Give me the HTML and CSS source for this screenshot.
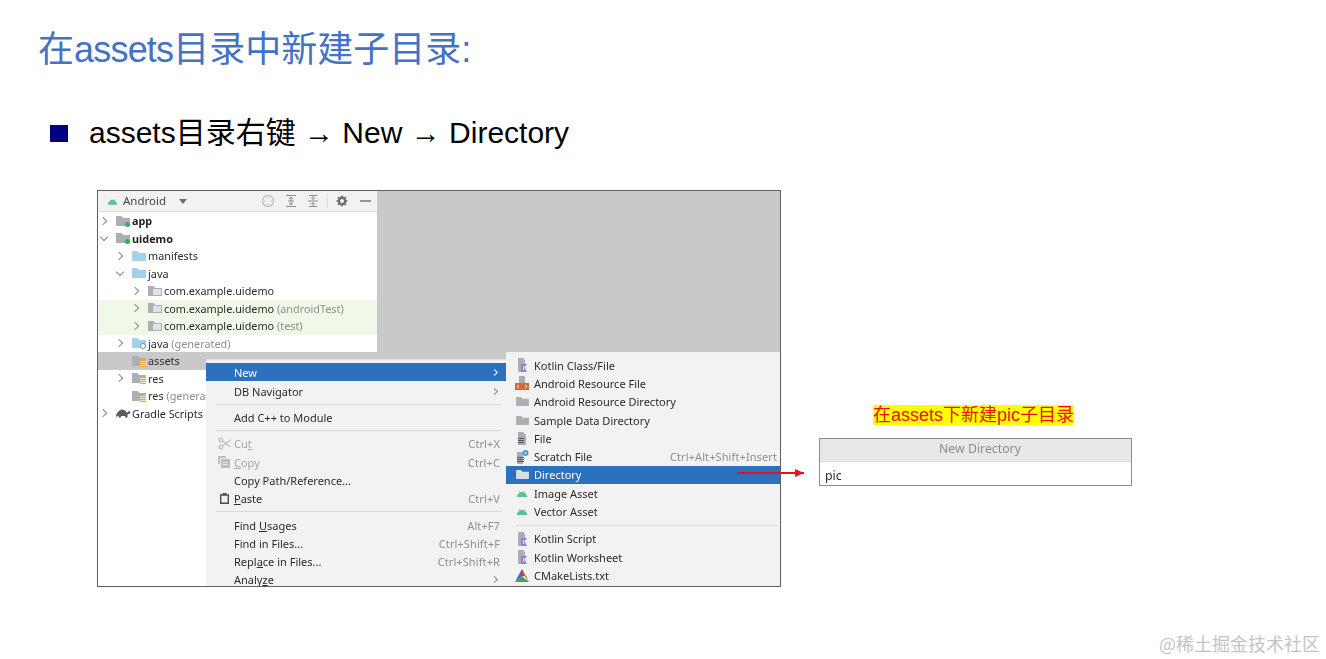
FILE: index.html
```html
<!DOCTYPE html>
<html lang="zh-CN">
<head>
<meta charset="utf-8">
<title>在assets目录中新建子目录</title>
<link rel="stylesheet" href="styles.css">
</head>
<body>
<svg class="defs" width="0" height="0" aria-hidden="true">
  <symbol id="android" viewBox="0 0 14 10"><path d="M1 9c.3-2.500 1.600-4.300 3.400-5.200L3.400 2.200l.5-.3 1.100 1.600c1.300-.5 2.700-.5 4 0l1.100-1.600.5.3-1 1.600C11.400 4.700 12.700 6.500 13 9z"/></symbol>
  <symbol id="folder" viewBox="0 0 14 12"><path d="M0 1h5.500l1.500 2h7v8H0z"/></symbol>
  <symbol id="k-file" viewBox="0 0 14 14"><path fill="#a9adb8" d="M3 0h6v2h1v4H6v8H3z"/><path fill="#8f7fd0" d="M6 6h6L9.500 9.500 12 14H6z"/><path fill="#f2f2f2" d="M8 8h1.500L8.500 10l1 2H8z"/></symbol>
</svg>

<h1 class="title">在<span class="latin">assets</span>目录中新建子目录:</h1>

<div class="bullet-row">
  <span class="bullet"></span>
  <p class="bullet-text">assets目录右键 → New → Directory</p>
</div>

<main class="content">
  <section class="shot">
    <div class="tree">
      <header class="tool-header">
        <svg class="ico-android" width="11" height="9"><use href="#android"/></svg>
        <span class="tool-name">Android</span>
        <span class="caret"></span>
        <svg class="tool-icons" width="112" height="16" viewBox="0 0 112 16" fill="none" stroke="#8c8c8c">
          <circle cx="6" cy="8" r="5.500" stroke="#c4c4c4" stroke-width="1.500"/>
          <path d="M6 4v2M6 10v2M2 8h2M8 8h2" stroke="#c4c4c4"/>
          <path d="M24 2.500h10M24 13.500h10M29 4v8M27 6l2-2 2 2M27 10l2 2 2-2M26 8h6"/>
          <path d="M46 8h10M47 2.500h8M47 13.500h8M51 2v4M51 10v4M49 4.500l2 2 2-2M49 11.500l2-2 2 2"/>
          <path d="M65.500 1v14" stroke="#dcdcdc"/>
          <circle cx="80" cy="8" r="3.200" stroke="#6e6e6e" stroke-width="2.400"/>
          <path d="M80 2.500v2M80 11.500v2M74.500 8h2M83.500 8h2M76 4l1.500 1.500M84 4l-1.500 1.500M76 12l1.500-1.500M84 12l-1.500-1.500" stroke="#6e6e6e" stroke-width="1.600"/>
          <path d="M98 8h11" stroke="#6e6e6e" stroke-width="1.400"/>
        </svg>
      </header>

      <div class="row d0"><span class="chev right"></span><span class="ic"><svg class="f-grey" width="14" height="12"><use href="#folder"/></svg><i class="dot"></i></span><b>app</b></div>
      <div class="row d0"><span class="chev down"></span><span class="ic"><svg class="f-grey" width="14" height="12"><use href="#folder"/></svg><i class="dot"></i></span><b>uidemo</b></div>
      <div class="row d1"><span class="chev right"></span><span class="ic"><svg class="f-blue" width="14" height="12"><use href="#folder"/></svg></span>manifests</div>
      <div class="row d1"><span class="chev down"></span><span class="ic"><svg class="f-blue" width="14" height="12"><use href="#folder"/></svg></span>java</div>
      <div class="row d2"><span class="chev right"></span><span class="ic"><svg class="f-grey" width="14" height="12"><use href="#folder"/></svg><i class="pkg"></i></span>com.example.uidemo</div>
      <div class="row d2 test"><span class="chev right"></span><span class="ic"><svg class="f-grey" width="14" height="12"><use href="#folder"/></svg><i class="pkg"></i></span>com.example.uidemo&nbsp;<span class="dim">(androidTest)</span></div>
      <div class="row d2 test"><span class="chev right"></span><span class="ic"><svg class="f-grey" width="14" height="12"><use href="#folder"/></svg><i class="pkg"></i></span>com.example.uidemo&nbsp;<span class="dim">(test)</span></div>
      <div class="row d1"><span class="chev right"></span><span class="ic"><svg class="f-blue" width="14" height="12"><use href="#folder"/></svg><i class="gear"></i></span>java&nbsp;<span class="dim">(generated)</span></div>
      <div class="row d1 picked"><span class="chev"></span><span class="ic"><svg class="f-grey" width="14" height="12"><use href="#folder"/></svg><i class="lines"></i></span>assets</div>
      <div class="row d1"><span class="chev right"></span><span class="ic"><svg class="f-grey" width="14" height="12"><use href="#folder"/></svg><i class="lines"></i></span>res</div>
      <div class="row d1"><span class="chev"></span><span class="ic"><svg class="f-grey" width="14" height="12"><use href="#folder"/></svg><i class="lines"></i></span>res&nbsp;<span class="dim">(generated)</span></div>
      <div class="row d0"><span class="chev right"></span><span class="ic"><svg width="15" height="10" viewBox="0 0 15 10" fill="#5c5c5c"><path d="M0 9c0-3 1-4 2-5 1.500-2 4-3 6-2 1.500.5 2.500 2 3 3 .5-1.500 2-2 3-1.500.8.500.5 1.800-.5 2.300l-2 .7v3H9V8H5v1.500H2.500V7.500z"/></svg></span>Gradle Scripts</div>
    </div>

    <nav class="menu">
      <div class="item on"><span class="lead"></span><span class="label">New</span><span class="more"></span></div>
      <div class="item"><span class="lead"></span><span class="label">DB Navigator</span><span class="more"></span></div>
      <hr class="sep">
      <div class="item"><span class="lead"></span><span class="label">Add C++ to Module</span></div>
      <hr class="sep">
      <div class="item off"><span class="lead"><svg width="13" height="13" viewBox="0 0 13 13" fill="none" stroke="#bdbdbd" stroke-width="1.300"><circle cx="2.800" cy="3" r="1.800"/><circle cx="2.800" cy="10" r="1.800"/><path d="M4.500 4l8 6M4.500 9l8-6"/></svg></span><span class="label">Cu<u>t</u></span><span class="key">Ctrl+X</span></div>
      <div class="item off"><span class="lead"><svg width="12" height="12" viewBox="0 0 12 12" fill="#bdbdbd"><path d="M0 0h8v2H2v6H0z"/><path d="M3 3h9v9H3z"/><path fill="#e6e6e6" d="M5 6h5v1H5zM5 8h5v1H5z"/></svg></span><span class="label"><u>C</u>opy</span><span class="key">Ctrl+C</span></div>
      <div class="item"><span class="lead"></span><span class="label">Copy Path/Reference...</span></div>
      <div class="item"><span class="lead"><svg width="9" height="11" viewBox="0 0 9 11" fill="none" stroke="#4a4a4a" stroke-width="1.400"><path d="M.7 2h7.600v8.300H.7z"/><path d="M2.500.7h4" stroke-width="1.800"/></svg></span><span class="label"><u>P</u>aste</span><span class="key">Ctrl+V</span></div>
      <hr class="sep">
      <div class="item"><span class="lead"></span><span class="label">Find <u>U</u>sages</span><span class="key">Alt+F7</span></div>
      <div class="item"><span class="lead"></span><span class="label">Find in Files...</span><span class="key">Ctrl+Shift+F</span></div>
      <div class="item"><span class="lead"></span><span class="label">Repl<u>a</u>ce in Files...</span><span class="key">Ctrl+Shift+R</span></div>
      <div class="item"><span class="lead"></span><span class="label">Analy<u>z</u>e</span><span class="more"></span></div>
    </nav>

    <nav class="submenu">
      <div class="item"><span class="sic"><svg width="14" height="14"><use href="#k-file"/></svg></span><span class="label">Kotlin Class/File</span></div>
      <div class="item"><span class="sic"><svg width="14" height="14" viewBox="0 0 14 14"><path fill="#a9adb8" d="M4 0h6v7H4z"/><path fill="#d9673a" d="M0 7h14v7H0z"/><path fill="none" stroke="#fff" d="M4 9l-2 1.500L4 12M10 9l2 1.500L10 12"/></svg></span><span class="label">Android Resource File</span></div>
      <div class="item"><span class="sic"><svg class="f-grey" width="13" height="11"><use href="#folder"/></svg></span><span class="label">Android Resource Directory</span></div>
      <div class="item"><span class="sic"><svg class="f-grey" width="13" height="11"><use href="#folder"/></svg></span><span class="label">Sample Data Directory</span></div>
      <div class="item"><span class="sic"><svg width="10" height="13" viewBox="0 0 10 13"><path fill="#a9adb8" d="M1 0h5l3 3v10H1z"/><path fill="#555" d="M1 6h6v1H1zM1 8h6v1H1zM1 10h6v1H1z"/></svg></span><span class="label">File</span></div>
      <div class="item"><span class="sic"><svg width="14" height="14" viewBox="0 0 14 14"><path fill="#a9adb8" d="M2 2h6v12H2z"/><path fill="#555" d="M2 7h7v1H2zM2 9h7v1H2zM2 11h7v1H2z"/><circle cx="10.500" cy="3" r="3" fill="#3f9bd6"/><circle cx="10.500" cy="3" r="1" fill="#f2f2f2"/></svg></span><span class="label">Scratch File</span><span class="key">Ctrl+Alt+Shift+Insert</span></div>
      <div class="item on"><span class="sic"><svg class="f-pale" width="13" height="11"><use href="#folder"/></svg></span><span class="label">Directory</span></div>
      <div class="item"><span class="sic"><svg class="f-green" width="12" height="9"><use href="#android"/></svg></span><span class="label">Image Asset</span></div>
      <div class="item"><span class="sic"><svg class="f-green" width="12" height="9"><use href="#android"/></svg></span><span class="label">Vector Asset</span></div>
      <hr class="sep">
      <div class="item"><span class="sic"><svg width="14" height="14"><use href="#k-file"/></svg></span><span class="label">Kotlin Script</span></div>
      <div class="item"><span class="sic"><svg width="14" height="14"><use href="#k-file"/></svg></span><span class="label">Kotlin Worksheet</span></div>
      <div class="item"><span class="sic"><svg width="14" height="13" viewBox="0 0 14 13"><path fill="#d8352a" d="M7 0l2.500 7L7 7.500z"/><path fill="#2f6fc4" d="M7 0L0 13l7-5.500z"/><path fill="#3aa655" d="M7 7.500L0 13h14z"/><path fill="#d8352a" d="M7 0l7 13-4.500-6z"/></svg></span><span class="label">CMakeLists.txt</span></div>
    </nav>
  </section>

  <aside class="side">
    <p class="caption"><span class="mark">在assets下新建pic子目录</span></p>
    <div class="dialog">
      <div class="dialog-head">New Directory</div>
      <div class="dialog-input">pic</div>
    </div>
  </aside>
</main>

<div class="arrow"></div>
<div class="watermark">@稀土掘金技术社区</div>
</body>
</html>
```
FILE: styles.css
```css
* { box-sizing: border-box; }
html, body { margin: 0; padding: 0; }
body {
  position: relative;
  width: 1326px;
  height: 659px;
  overflow: hidden;
  background: #fff;
  font-family: "Liberation Sans", "Noto Sans CJK SC", sans-serif;
}
.defs { position: absolute; }

.title {
  margin: 0;
  padding: 26px 0 0 38px;
  height: 73px;
  font-size: 36px;
  line-height: 48px;
  font-weight: 400;
  color: #4472c4;
}
.latin { letter-spacing: -0.8px; }
.bullet-row {
  display: flex;
  align-items: center;
  height: 40px;
  margin-top: 40px;
  padding-left: 50px;
}
.bullet { width: 18px; height: 17px; background: #000080; }
.bullet-text {
  margin: 0 0 0 21px;
  font-size: 30px;
  line-height: 40px;
  color: #000;
}

.content {
  display: flex;
  margin-top: 37px;
  padding-left: 97px;
}

.shot {
  position: relative;
  flex: none;
  width: 684px;
  height: 397px;
  border: 1px solid #5f5f5f;
  background: #c9c9c9;
  overflow: hidden;
  font-family: "Noto Sans", sans-serif;
  font-size: 11px;
  color: #2b2b2b;
  filter: blur(0.3px);
}

.tree { width: 279px; height: 100%; background: #fff; font-size: 10.850px; }
.tool-header {
  display: flex;
  align-items: center;
  height: 21px;
  padding-left: 9px;
  background: #f2f2f2;
  border-bottom: 1px solid #dedede;
}
.ico-android { fill: #5cc28d; }
.tool-name { margin: -2px 0 0 5px; color: #444; font-size: 11.500px; }
.caret {
  margin-left: 13px;
  border-left: 4.500px solid transparent;
  border-right: 4.500px solid transparent;
  border-top: 5px solid #6e6e6e;
}
.tool-icons { margin-left: 75px; }

.row {
  display: flex;
  align-items: center;
  height: 17.500px;
  white-space: nowrap;
}
.d0 { padding-left: 2px; }
.d1 { padding-left: 18px; }
.d2 { padding-left: 34px; }
.row b { font-weight: 700; color: #222; }
.test { background: #eff8e9; }
.picked { background: #c9c9c9; }
.dim { color: #8f8f8f; }

.chev { position: relative; flex: none; width: 16px; height: 10px; }
.chev.right::before, .chev.down::before {
  content: "";
  position: absolute;
  width: 5px;
  height: 5px;
  border: solid #8a8a8a;
  border-width: 1px 1px 0 0;
}
.chev.right::before { left: 0; top: 2px; transform: rotate(45deg); }
.chev.down::before { left: 1px; top: 1px; transform: rotate(135deg); }

.ic {
  position: relative;
  flex: none;
  display: flex;
  align-items: center;
  width: 16px;
  height: 14px;
}
.ic i { position: absolute; display: block; }
.f-grey { fill: #aab0b6; }
.f-blue { fill: #a3d1ea; }
.f-pale { fill: #d7dee4; }
.f-green { fill: #5cc28d; }
.dot { right: 2px; bottom: 1px; width: 5px; height: 5px; border-radius: 50%; background: #37b24d; }
.pkg { left: 5px; top: 5px; width: 8px; height: 6px; background: #dfe3e6; }
.gear { right: 2px; bottom: 1px; width: 6px; height: 6px; border-radius: 50%; border: 1.500px solid #7d8a94; background: #fff; }
.lines {
  right: 2px;
  bottom: 1px;
  width: 6px;
  height: 7px;
  background: repeating-linear-gradient(#e6a93c 0 1px, #f6e6c4 1px 2px);
}

.menu, .submenu {
  position: absolute;
  display: flex;
  flex-direction: column;
  background: #f2f2f2;
  color: #2b2b2b;
  white-space: nowrap;
}
.menu { left: 108px; top: 169px; width: 300px; height: 227px; padding-top: 3px; box-shadow: 0 -1px 0 #e4e4e4; }
.submenu { left: 408px; top: 161px; width: 275px; height: 235px; padding-top: 4px; }

.item {
  flex: none;
  display: flex;
  align-items: center;
  height: 18.300px;
  padding-right: 6px;
}
.menu .item.on { margin-bottom: 0.8px; }
.submenu .item { padding-right: 4px; }
.item.on { background: #2b71bd; color: #fff; }
.lead {
  flex: none;
  display: flex;
  align-items: center;
  justify-content: center;
  width: 28px;
  padding-left: 8px;
}
.sic {
  flex: none;
  display: flex;
  align-items: center;
  justify-content: center;
  width: 28px;
  padding-left: 4px;
}
.label { flex: 1; }
.off .label { color: #a6a6a6; }
.key { color: #8f8f8f; letter-spacing: 0.1px; }
.more {
  flex: none;
  width: 5px;
  height: 5px;
  margin-right: 3px;
  border: solid #8a8a8a;
  border-width: 1.500px 1.500px 0 0;
  transform: rotate(45deg);
}
.on .more { border-color: #fff; }
.sep {
  flex: none;
  width: auto;
  height: 1px;
  margin: 3.500px 4px 3.500px 10px;
  border: 0;
  background: #d9d9d9;
}
.submenu .sep { margin: 4px 4px 4px 10px; }

.side { flex: none; width: 313px; margin: 215px 0 0 38px; }
.caption { margin: 0; height: 33px; padding-right: 4px; text-align: center; font-size: 18px; line-height: 21px; color: #e8140c; }
.mark { background: #ffff00; }
.dialog {
  border: 1px solid #8c8c8c;
  font-family: "Noto Sans", sans-serif;
  font-size: 12.300px;
  filter: blur(0.3px);
}
.dialog-head {
  height: 23px;
  line-height: 20px;
  padding-left: 9px;
  text-align: center;
  color: #8d8d8d;
  background: #e8e8e8;
  border-bottom: 1px solid #dcdcdc;
}
.dialog-input { height: 23px; line-height: 28px; padding-left: 5px; color: #2b2b2b; background: #fff; }

.arrow {
  position: absolute;
  left: 737px;
  top: 472px;
  width: 67px;
  height: 2px;
  background: #e3141c;
}
.arrow::after {
  content: "";
  position: absolute;
  right: 0;
  top: -3px;
  border-left: 9px solid #e3141c;
  border-top: 4px solid transparent;
  border-bottom: 4px solid transparent;
}

.watermark {
  position: absolute;
  right: 6px;
  bottom: 5px;
  font-family: "Noto Sans CJK SC", sans-serif;
  font-size: 18px;
  line-height: 22px;
  color: #c4c4c4;
}
```
